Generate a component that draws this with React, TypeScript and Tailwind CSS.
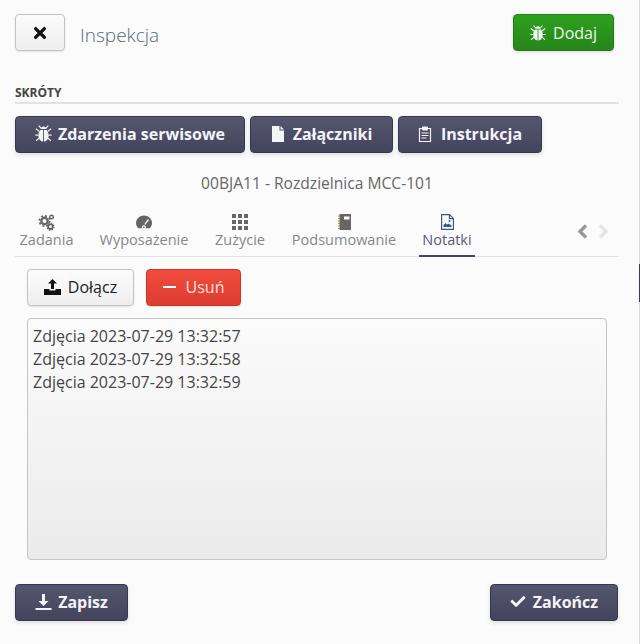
import { ReactNode } from "react";
import { FaCheck, FaTimes } from "react-icons/fa";

function BugIcon({ className }: { className?: string }) {
  return (
    <svg viewBox="0 0 16 16" className={className} fill="currentColor">
      <path d="M5.300 3.800C5.300 2.200 6.400 1.300 8 1.300s2.700.9 2.700 2.500z" />
      <path d="M7.600 4.600v11C5 15.300 3.200 13 3.200 9.800c0-2.200.7-4 1.800-5.200zM8.400 4.600H11c1.100 1.200 1.800 3 1.800 5.200 0 3.200-1.800 5.500-4.400 5.800z" />
      <path d="M3.500 .6l2.200 2.400M12.500 .6l-2.200 2.400M.8 3.500L4 6M15.200 3.500L12 6M.4 9.500h3M15.600 9.500h-3M1 14.800l3-2.600M15 14.800l-3-2.600" stroke="currentColor" strokeWidth="1.100" fill="none" />
    </svg>
  );
}

function CogsIcon({ className }: { className?: string }) {
  return (
    <svg viewBox="0 0 17 17" className={className} fill="none" stroke="currentColor">
      <circle cx="6.500" cy="7" r="3.200" strokeWidth="2.400" />
      <circle cx="6.500" cy="7" r="5.200" strokeWidth="1.600" strokeDasharray="2 2.080" />
      <circle cx="13.500" cy="3" r="1.800" strokeWidth="1.400" />
      <circle cx="12.500" cy="12.700" r="2.300" strokeWidth="1.800" />
      <circle cx="12.500" cy="12.700" r="3.500" strokeWidth="1.200" strokeDasharray="1.400 1.350" />
    </svg>
  );
}

function GaugeIcon({ className }: { className?: string }) {
  return (
    <svg viewBox="0 0 16 16" className={className} fill="currentColor">
      <path d="M2.200 14.200C.8 12.800 0 11 0 9c0-4.200 3.600-7.500 8-7.500S16 4.800 16 9c0 2-.8 3.800-2.200 5.200z" />
      <path d="M12.500 5.500L8.800 10.300M6.800 12.300a1.400 1.400 0 1 0 .1-.1z" stroke="#fbfbfb" strokeWidth="1.300" fill="none" />
    </svg>
  );
}

function FileIcon({ className }: { className?: string }) {
  return (
    <svg viewBox="0 0 14 16" className={className} fill="currentColor">
      <path d="M1 0h7.500v4.500H13V16H1zM9.500 0L13 3.500H9.500z" />
    </svg>
  );
}

function ClipboardIcon({ className }: { className?: string }) {
  return (
    <svg viewBox="0 0 14 16" className={className} fill="none" stroke="currentColor">
      <path d="M4 2.500H1.500v13h11v-13H10" strokeWidth="1.200" />
      <path d="M4.500 1h5v3h-5z" fill="currentColor" strokeWidth="1" />
      <path d="M3.500 7h7M3.500 9.500h7M3.500 12h5" strokeWidth="1.200" />
    </svg>
  );
}

function GridIcon({ className }: { className?: string }) {
  return (
    <svg viewBox="0 0 16 16" className={className} fill="currentColor">
      <path d="M0 0h4v4H0zM6 0h4v4H6zM12 0h4v4h-4zM0 6h4v4H0zM6 6h4v4H6zM12 6h4v4h-4zM0 12h4v4H0zM6 12h4v4H6zM12 12h4v4h-4z" />
    </svg>
  );
}

function NotebookIcon({ className }: { className?: string }) {
  return (
    <svg viewBox="0 0 13 16" className={className} fill="currentColor">
      <path d="M1.500 0H13v16H1.500zM6 2.500v3h5.500v-3z" fillRule="evenodd" />
      <path d="M0 2h2M0 4.500h2M0 7h2M0 9.500h2M0 12h2M0 14.500h2" stroke="#a98a5f" strokeWidth="1" />
    </svg>
  );
}

function PictureFileIcon({ className }: { className?: string }) {
  return (
    <svg viewBox="0 0 13 16" className={className} fill="none" stroke="currentColor">
      <path d="M.6.6h8l3.800 3.800v11H.6zM8.400.6v4h4" strokeWidth="1.200" />
      <path d="M2.500 13v-2l2-2 1.500 1.500 1.500-1 3 2V13z" fill="currentColor" stroke="none" />
      <circle cx="8.500" cy="7" r="1" fill="currentColor" stroke="none" />
    </svg>
  );
}

function UploadIcon({ className }: { className?: string }) {
  return (
    <svg viewBox="0 0 17 16" className={className} fill="currentColor">
      <path d="M8.500 0l4.500 4.500h-3V10H7V4.500H4z" />
      <path d="M0 10h5.500v1.500h6V10H17v6H0z" />
    </svg>
  );
}

function SaveIcon({ className }: { className?: string }) {
  return (
    <svg viewBox="0 0 17 16" className={className} fill="currentColor">
      <path d="M7 0h3v7h3.500l-5 5-5-5H7zM.5 14h16v2H.5z" />
    </svg>
  );
}

function Chevron({ dir, className }: { dir: "left" | "right"; className: string }) {
  return (
    <svg viewBox="0 0 11 15" className={className} fill="none" stroke="currentColor" strokeWidth="3.400">
      <path d={dir === "left" ? "M9 1.500L3 7.500 9 13.500" : "M2 1.500L8 7.500 2 13.500"} />
    </svg>
  );
}

function DarkButton({ icon, label, className }: { icon: ReactNode; label: string; className: string }) {
  return (
    <button className={`flex h-[37px] items-center justify-center rounded border border-[#373750] bg-gradient-to-b from-[#55556f] to-[#44445c] pb-[2px] text-[16px] font-bold text-[#f4f4f8] shadow-[0_2px_4px_rgba(0,0,0,0.12)] ${className}`}>
      {icon}
      {label}
    </button>
  );
}

const tabs = [
  { label: "Zadania", icon: <CogsIcon className="h-[17px] w-[17px]" />, className: "w-[63px]" },
  { label: "Wyposażenie", icon: <GaugeIcon className="h-[16px] w-[16px]" />, className: "w-[98px] ml-[17px]" },
  { label: "Zużycie", icon: <GridIcon className="h-[16px] w-[16px]" />, className: "w-[60px] ml-[17px]" },
  { label: "Podsumowanie", icon: <NotebookIcon className="h-[16px] w-[13px]" />, className: "w-[114px] ml-[17px]" },
];

export default function App() {
  return (
    <div className="flex h-[644px] w-[640px] overflow-hidden bg-[#fbfbfb] font-['Open_Sans',sans-serif] text-[#444]">
      <div className="flex w-[639px] flex-col pl-[15px] pr-[20px] pt-[14px]">
        {/* Header */}
        <div className="flex items-center justify-between pr-[5px]">
          <div className="flex items-center gap-[15px]">
            <button className="flex h-[37px] w-[50px] items-center justify-center rounded border border-[#c4c4c4] bg-gradient-to-b from-[#fcfcfc] to-[#eeeeee] text-[#111] shadow-[0_1px_2px_rgba(0,0,0,0.1)]">
              <FaTimes className="h-[18px] w-[16px]" />
            </button>
            <h1 className="pt-[5px] text-[19px] font-light text-[#566a7c]">Inspekcja</h1>
          </div>
          <button className="flex h-[37px] w-[101px] items-center justify-center gap-[7px] rounded border border-[#227c14] bg-gradient-to-b from-[#2fa01f] to-[#26851a] text-[16px] text-[#eef8ec] shadow-[0_1px_3px_rgba(0,0,0,0.15)]">
            <BugIcon className="h-[16px] w-[16px]" />
            Dodaj
          </button>
        </div>

        {/* Shortcuts */}
        <div className="mt-[33px] h-[20px] border-b-2 border-[#e2e2e2] text-[12px] font-bold leading-[18px] text-[#444]">SKRÓTY</div>
        <div className="mt-[12px] flex gap-[5px]">
          <DarkButton icon={<BugIcon className="h-[17px] w-[17px]" />} label="Zdarzenia serwisowe" className="w-[230px] gap-[6px]" />
          <DarkButton icon={<FileIcon className="h-[16px] w-[14px]" />} label="Załączniki" className="w-[143px] gap-[8px]" />
          <DarkButton icon={<ClipboardIcon className="h-[16px] w-[14px]" />} label="Instrukcja" className="w-[144px] gap-[9px]" />
        </div>

        <div className="mt-[19px] text-center text-[15.6px] leading-[22px] text-[#666]">00BJA11 - Rozdzielnica MCC-101</div>

        {/* Tabs */}
        <div className="mt-[20px] flex h-[43px] border-b border-[#e2e2e2]">
          {tabs.map((t) => (
            <div key={t.label} className={`flex flex-col items-center text-[#888] ${t.className}`}>
              <div className="flex h-[16px] items-center text-[#666]">{t.icon}</div>
              <span className="whitespace-nowrap text-[14.5px] leading-[20px]">{t.label}</span>
            </div>
          ))}
          <div className="ml-[18px] flex h-[43px] w-[56px] flex-col items-center border-b-2 border-[#474762] text-[#5a5a72]">
            <div className="flex h-[16px] items-center text-[#3f5a85]">
              <PictureFileIcon className="h-[16px] w-[13px]" />
            </div>
            <span className="text-[14.5px] leading-[20px]">Notatki</span>
          </div>
          <div className="ml-auto mr-[10px] flex h-[34px] items-center gap-[10px]">
            <Chevron dir="left" className="h-[15px] w-[11px] text-[#999]" />
            <Chevron dir="right" className="h-[15px] w-[11px] text-[#e4e4e4]" />
          </div>
        </div>

        {/* Notes */}
        <div className="px-[12px]">
          <div className="mt-[12px] flex gap-[12px]">
            <button className="flex h-[37px] w-[107px] items-center justify-center gap-[7px] rounded border border-[#c4c4c4] bg-gradient-to-b from-[#fcfcfc] to-[#eeeeee] pb-[2px] text-[16px] text-[#222] shadow-[0_1px_2px_rgba(0,0,0,0.1)]">
              <UploadIcon className="h-[16px] w-[17px] text-[#111]" />
              Dołącz
            </button>
            <button className="flex h-[37px] w-[95px] items-center justify-center gap-[10px] rounded border border-[#c9352a] bg-gradient-to-b from-[#f04c3e] to-[#dd3c31] pb-[2px] text-[16px] text-[#fde2df] shadow-[0_1px_2px_rgba(0,0,0,0.1)]">
              <span className="h-[2px] w-[13px] bg-white" />
              Usuń
            </button>
          </div>
          <div className="mt-[12px] h-[242px] w-[580px] rounded border border-[#c6c6c6] bg-gradient-to-b from-[#fbfbfb] to-[#ebebeb] px-[5px] pt-[6px] text-[16px] leading-[23px] text-[#444]">
            <div>Zdjęcia 2023-07-29 13:32:57</div>
            <div>Zdjęcia 2023-07-29 13:32:58</div>
            <div>Zdjęcia 2023-07-29 13:32:59</div>
          </div>
        </div>

        {/* Footer */}
        <div className="mt-[24px] flex justify-between pr-[1px]">
          <DarkButton icon={<SaveIcon className="h-[16px] w-[17px]" />} label="Zapisz" className="w-[113px] gap-[6px]" />
          <DarkButton icon={<FaCheck className="h-[15px] w-[16px]" />} label="Zakończ" className="w-[128px] gap-[7px]" />
        </div>
      </div>

      {/* Window edge */}
      <div className="flex w-[1px] flex-col bg-[#dcdcdc]">
        <div className="mt-[264px] h-[38px] bg-[#3b3b52]" />
      </div>
    </div>
  );
}
